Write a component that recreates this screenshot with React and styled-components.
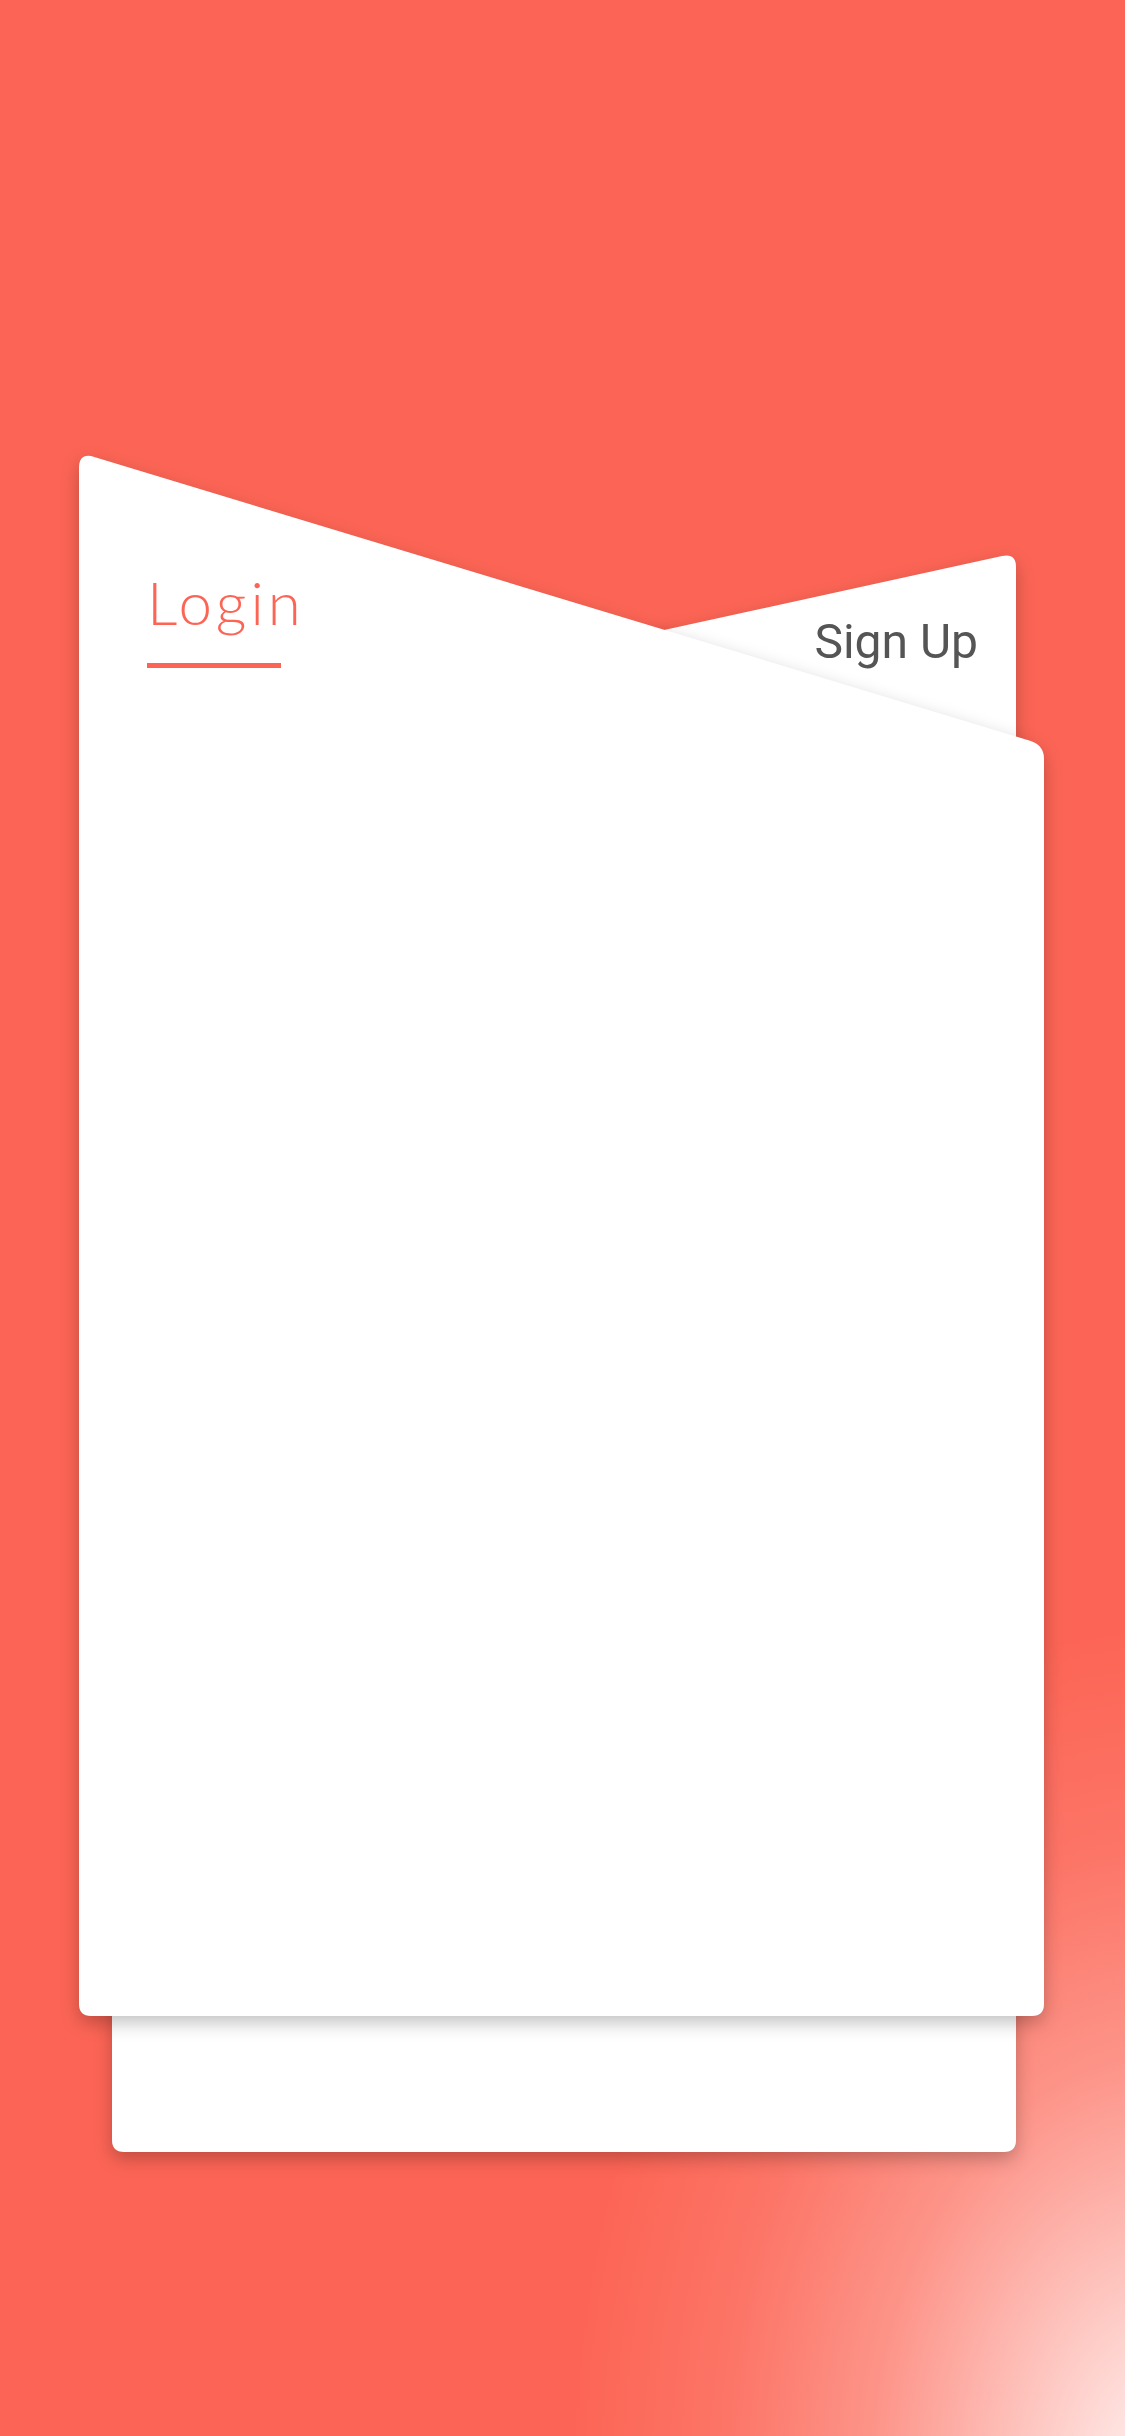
import React from 'react';
import styled, { createGlobalStyle } from 'styled-components';

const coral = '#fc6555';

const GlobalStyle = createGlobalStyle`
  html, body {
    margin: 0;
    padding: 0;
  }
  body {
    font-family: 'Roboto', 'Liberation Sans', sans-serif;
    background: ${coral};
  }
`;

// card outlines, in the card's own pixels (top edge is slanted)
const frontPath = `path('M 0 16 Q 0 2 12 4 L 951 288.8 Q 965 293 965 307 L 965 1552 Q 965 1564 953 1564 L 12 1564 Q 0 1564 0 1552 Z')`;
const backPath = `path('M 0 198 L 890 3 Q 904 0 904 14 L 904 1587 Q 904 1599 892 1599 L 12 1599 Q 0 1599 0 1587 Z')`;

const Page = styled.main`
  min-height: 100vh;
  height: 2436px;
  box-sizing: border-box;
  padding: 452px 81px 0 79px;
  background:
    radial-gradient(ellipse 600px 860px at 104% 102%,
      rgba(255,255,255,0.95) 0%,
      rgba(255,255,255,0.62) 25%,
      rgba(255,255,255,0.3) 50%,
      rgba(255,255,255,0.1) 75%,
      rgba(255,255,255,0) 100%),
    ${coral};
  overflow: hidden;
`;

const Stack = styled.div`
  display: grid;
  width: 965px;
`;

const Layer = styled.div`
  grid-area: 1 / 1;
  align-self: start;
  margin: ${p => p.$back ? '101px 28px 0 33px' : '0'};
  filter: drop-shadow(0 7px 9px rgba(0, 0, 0, 0.24));
`;

const Surface = styled.section`
  background: #fff;
  height: ${p => p.$height}px;
  clip-path: ${p => p.$shape};
  box-sizing: border-box;
`;

const LoginTab = styled.div`
  display: inline-flex;
  flex-direction: column;
  padding: 120px 0 0 68px;
`;

const LoginLabel = styled.span`
  font-family: 'Lato', 'Liberation Sans', sans-serif;
  font-weight: 300;
  font-size: 60px;
  line-height: 1;
  letter-spacing: 4px;
  color: ${coral};
`;

const Underline = styled.span`
  display: block;
  width: 134px;
  height: 5px;
  margin-top: 31px;
  background: ${coral};
`;

const SignUpRow = styled.div`
  display: flex;
  justify-content: flex-end;
  padding: 65px 38px 0 0;
`;

const SignUpLabel = styled.span`
  font-family: 'Roboto', 'Liberation Sans', sans-serif;
  font-size: 48px;
  line-height: 1;
  color: #555;
`;

export default function App() {
  return (
    <>
      <GlobalStyle />
      <Page>
        <Stack>
          <Layer $back>
            <Surface $height={1599} $shape={backPath}>
              <SignUpRow>
                <SignUpLabel>Sign Up</SignUpLabel>
              </SignUpRow>
            </Surface>
          </Layer>
          <Layer>
            <Surface $height={1564} $shape={frontPath}>
              <LoginTab>
                <LoginLabel>Login</LoginLabel>
                <Underline />
              </LoginTab>
            </Surface>
          </Layer>
        </Stack>
      </Page>
    </>
  );
}
